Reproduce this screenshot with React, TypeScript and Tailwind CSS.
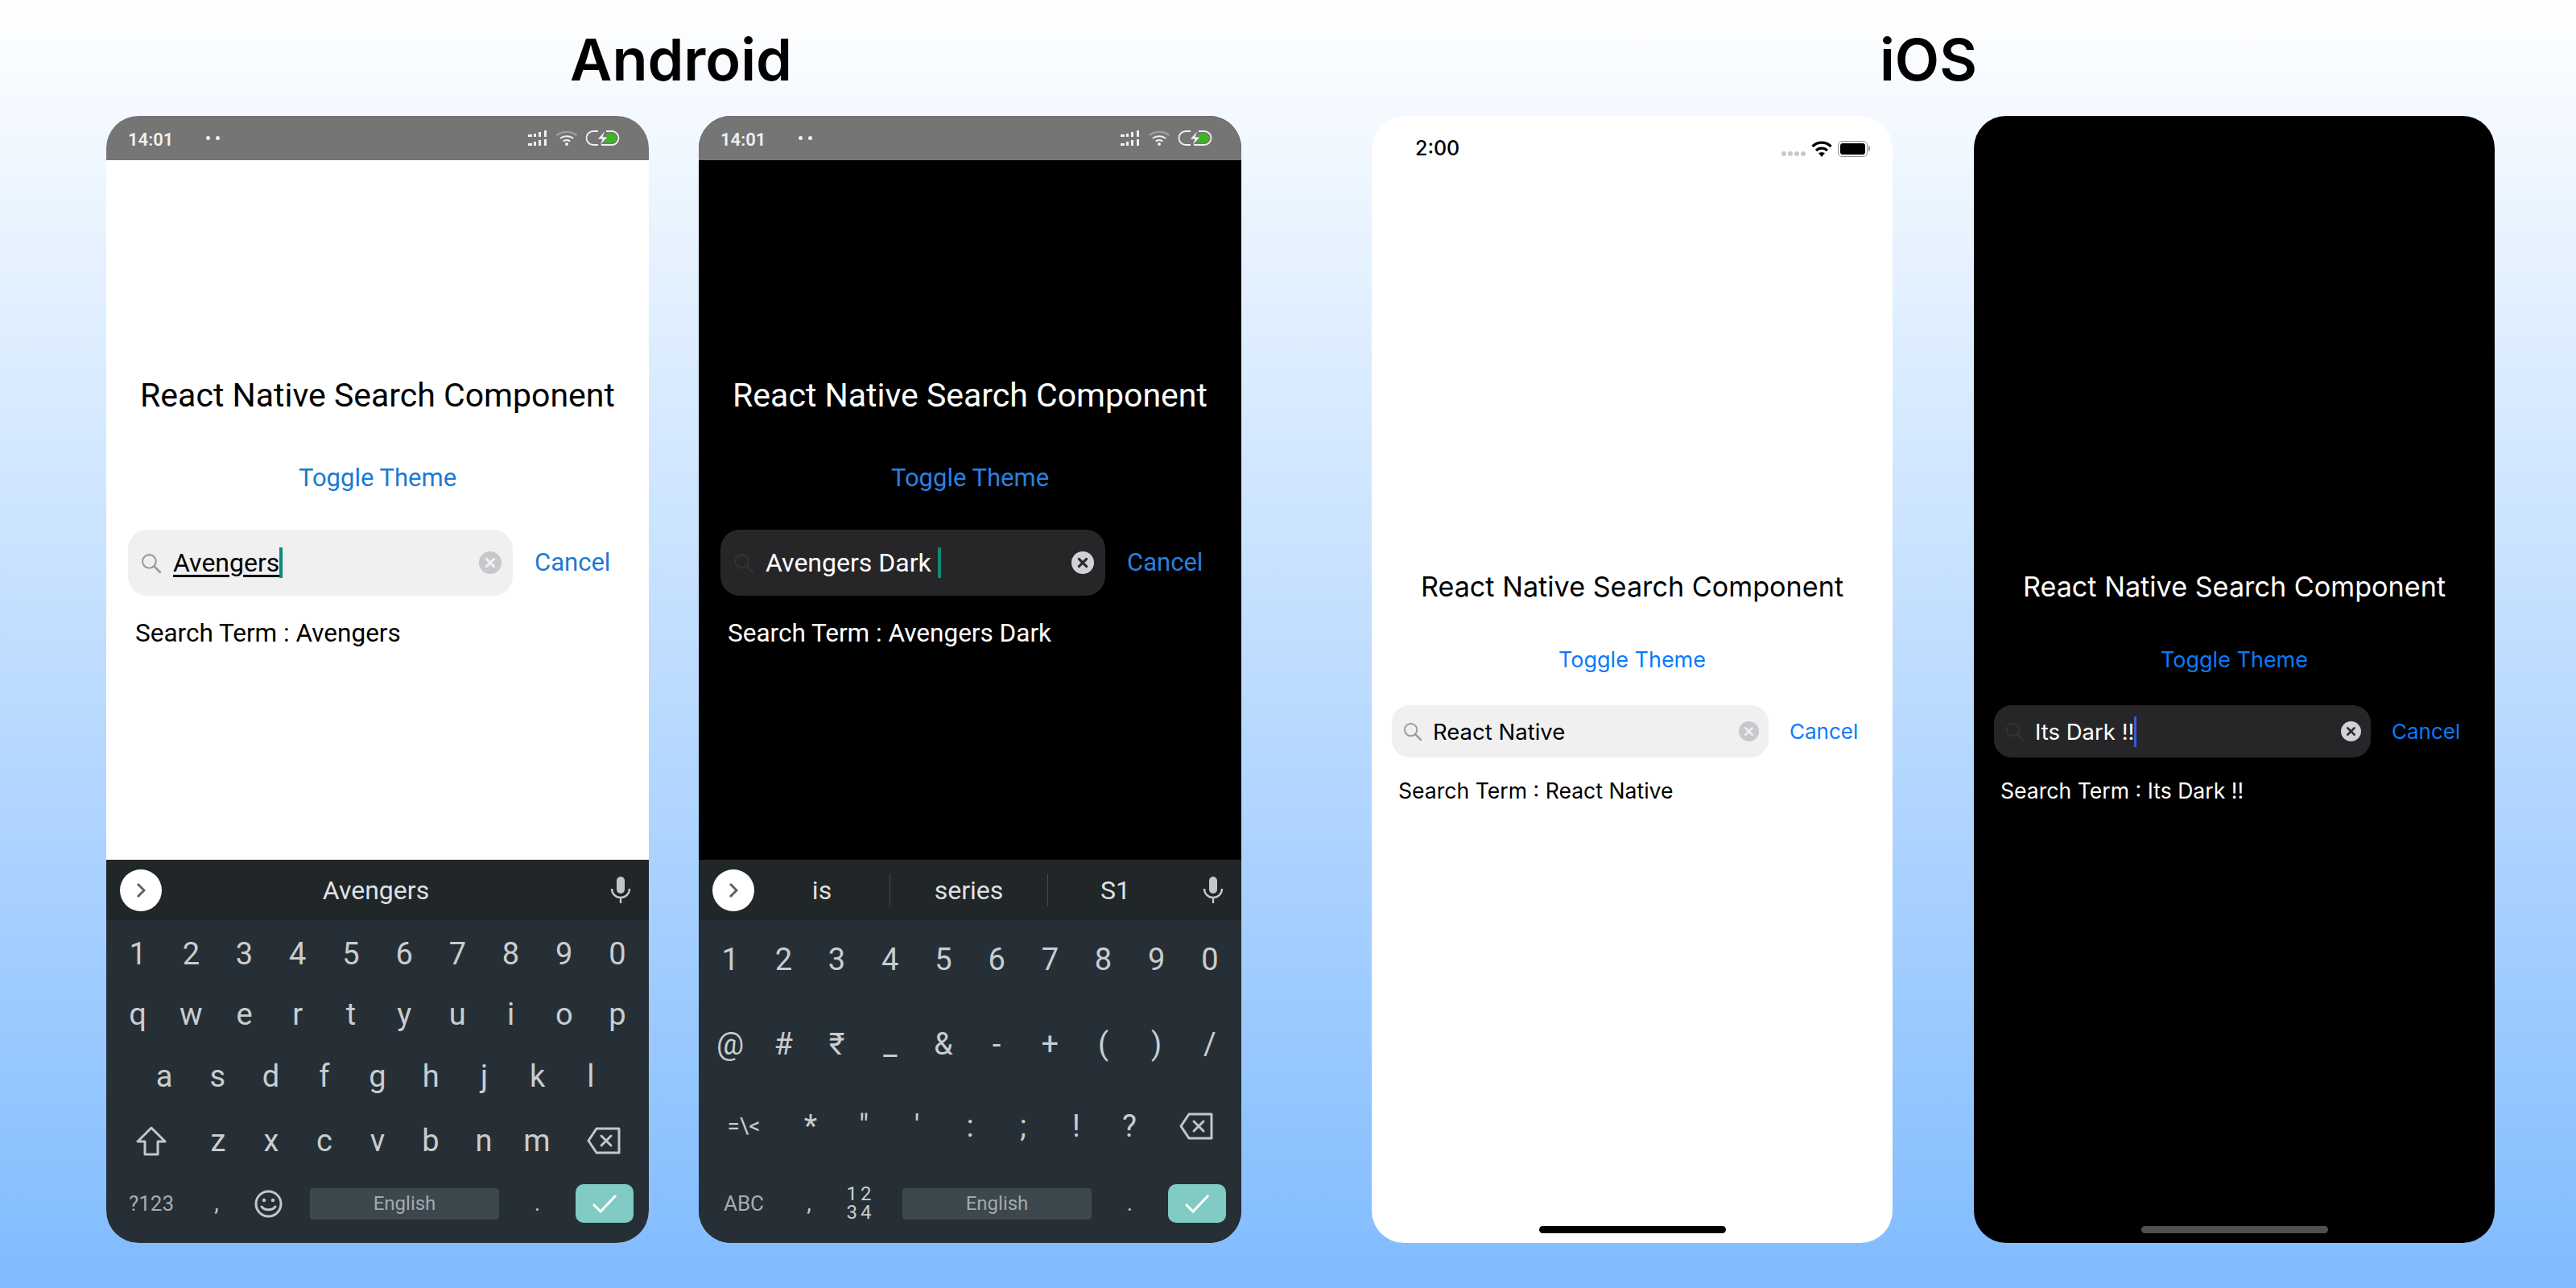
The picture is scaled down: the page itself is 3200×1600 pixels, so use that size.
import type { ReactNode } from "react";

const ROW_1 = ["1", "2", "3", "4", "5", "6", "7", "8", "9", "0"];
const QWERTY = ["q", "w", "e", "r", "t", "y", "u", "i", "o", "p"];
const ASDF = ["a", "s", "d", "f", "g", "h", "j", "k", "l"];
const ZXCV = ["z", "x", "c", "v", "b", "n", "m"];
const SYMBOLS = ["@", "#", "₹", "_", "&", "-", "+", "(", ")", "/"];
const MORE_SYMBOLS = ["*", '"', "'", ":", ";", "!", "?"];

function SearchIcon({ color, size }: { color: string; size: number }) {
  return (
    <svg width={size} height={size} viewBox="0 0 24 24" fill="none" stroke={color} strokeWidth="2" className="shrink-0">
      <circle cx="10" cy="10" r="8" />
      <path d="M16 16l7 7" strokeLinecap="round" strokeWidth="2.6" />
    </svg>
  );
}

function ClearIcon({ dark, size }: { dark: boolean; size: number }) {
  return (
    <svg width={size} height={size} viewBox="0 0 24 24" className="shrink-0">
      <circle cx="12" cy="12" r="12" fill={dark ? "#d2d2d6" : "#c7c7cc"} />
      <path
        d="M8 8l8 8M16 8l-8 8"
        stroke={dark ? "#2a2a2c" : "#f0f0f0"}
        strokeWidth="2.6"
        strokeLinecap="round"
      />
    </svg>
  );
}

function AndroidSignal() {
  return (
    <svg width="25" height="19" viewBox="0 0 25 19" fill="#f0f0f0">
      <rect x="0" y="5" width="5" height="3" />
      <rect x="7" y="4" width="3" height="4" />
      <rect x="13" y="2" width="3" height="6" />
      <rect x="20" y="0" width="3" height="8" />
      <rect x="0" y="16" width="5" height="3" />
      <rect x="7" y="14" width="3" height="5" />
      <rect x="13" y="12" width="3" height="7" />
      <rect x="20" y="11" width="3" height="8" />
    </svg>
  );
}

function AndroidWifi() {
  return (
    <svg width="26" height="19" viewBox="0 0 26 19" fill="none" strokeLinecap="round">
      <path d="M1.5 5.5a16 12 0 0 1 23 0" stroke="#a0a0a0" strokeWidth="2.4" />
      <path d="M5.5 9.5a11 8 0 0 1 15 0" stroke="#f0f0f0" strokeWidth="2" />
      <path d="M9.5 13a6 4.5 0 0 1 7 0" stroke="#f0f0f0" strokeWidth="2" />
      <circle cx="13" cy="17" r="2" fill="#f0f0f0" />
    </svg>
  );
}

function AndroidBattery() {
  return (
    <svg width="43" height="19" viewBox="0 0 43 19" fill="none">
      <path d="M16 1H10a8.5 8.5 0 0 0 0 17h6" stroke="#f0f0f0" strokeWidth="1.8" />
      <path d="M26 1h7a8.5 8.5 0 0 1 0 17H20" stroke="#f0f0f0" strokeWidth="1.8" />
      <path d="M27 3.5h6a6 6 0 0 1 0 12h-9z" fill="#3cb521" />
      <path d="M25 0L15 11h6l-3 8 10-11h-6z" fill="#f4f4f4" stroke="#757575" strokeWidth="0.8" />
    </svg>
  );
}

function BackspaceIcon() {
  return (
    <svg width="42" height="34" viewBox="0 0 42 34" fill="none" stroke="#c4c7c9" strokeWidth="3">
      <path d="M12 2h28v30H12L2 17z" strokeLinejoin="round" />
      <path d="M18 11l12 12M30 11L18 23" strokeLinecap="round" />
    </svg>
  );
}

function ShiftIcon() {
  return (
    <svg width="38" height="37" viewBox="0 0 38 37" fill="none" stroke="#c4c7c9" strokeWidth="3" strokeLinejoin="round">
      <path d="M19 2L2 19h9v16h16V19h9z" />
    </svg>
  );
}

function EmojiIcon() {
  return (
    <svg width="35" height="35" viewBox="0 0 35 35" fill="none" stroke="#c4c7c9" strokeWidth="3">
      <circle cx="17.5" cy="17.5" r="15.5" />
      <circle cx="12" cy="13" r="2.2" fill="#c4c7c9" stroke="none" />
      <circle cx="23" cy="13" r="2.2" fill="#c4c7c9" stroke="none" />
      <path d="M9 21c4 5 13 5 17 0" strokeLinecap="round" />
    </svg>
  );
}

function MicIcon() {
  return (
    <svg width="26" height="34" viewBox="0 0 26 34" fill="none">
      <rect x="8" y="0" width="10" height="21" rx="5" fill="#c4c7c9" />
      <path d="M2 15a11 11 0 0 0 22 0M13 26v7" stroke="#c4c7c9" strokeWidth="2.4" />
    </svg>
  );
}

function Key({ children, className = "" }: { children: ReactNode; className?: string }) {
  return <div className={`flex flex-1 items-center justify-center ${className}`}>{children}</div>;
}

function KeyRow({ children, className = "" }: { children: ReactNode; className?: string }) {
  return <div className={`flex w-full items-center text-[38px] font-normal leading-none text-[#c9cdd0] ${className}`}>{children}</div>;
}

function BottomRow({ left, third }: { left: string; third: ReactNode }) {
  return (
    <KeyRow className="mt-auto h-[48px] pr-[13px]">
      <div className="flex w-[100px] justify-center text-[26px] text-[#a9adb0]">{left}</div>
      <div className="flex w-[62px] justify-center text-[28px] text-[#c4c7c9]">,</div>
      <div className="flex w-[66px] justify-center">{third}</div>
      <div className="ml-[19px] flex h-[39px] w-[235px] items-center justify-center rounded-[4px] bg-[#3c474e] text-[24px] font-normal text-[#a4a9ac]">
        English
      </div>
      <div className="flex flex-1 justify-center text-[28px] text-[#c4c7c9]">.</div>
      <div className="flex h-[48px] w-[72px] items-center justify-center rounded-[10px] bg-[#80cbc4]">
        <svg width="30" height="24" viewBox="0 0 30 24" fill="none" stroke="#fff" strokeWidth="3">
          <path d="M1 13l9 9L29 2" />
        </svg>
      </div>
    </KeyRow>
  );
}

function Keyboard({ symbols, suggestions }: { symbols: boolean; suggestions: string[] }) {
  return (
    <div className="flex h-[476px] shrink-0 flex-col bg-[#272f36]">
      <div className="flex h-[75px] shrink-0 items-center bg-[#212629] pl-[17px] pr-[22px] text-[32px] text-[#dfe1e2]">
        <div className="flex h-[52px] w-[52px] shrink-0 items-center justify-center rounded-full bg-white">
          <svg width="12" height="20" viewBox="0 0 12 20" fill="none" stroke="#616161" strokeWidth="3">
            <path d="M2 2l8 8-8 8" />
          </svg>
        </div>
        <div className="flex w-[532px] items-center">
          {suggestions.map((word, i) => (
            <div
              key={word}
              className={`flex h-[40px] items-center justify-center ${suggestions.length === 1 ? "w-full" : i === 1 ? "w-[196px]" : "w-[168px]"} ${i > 0 ? "border-l border-[#454b4f]" : ""}`}
            >
              {word}
            </div>
          ))}
        </div>
        <div className="ml-auto flex">
          <MicIcon />
        </div>
      </div>
      {symbols ? (
        <div className="flex flex-1 flex-col px-[6px] pb-[25px] pt-[25px]">
          <KeyRow className="h-[48px]">{ROW_1.map((k) => <Key key={k}>{k}</Key>)}</KeyRow>
          <KeyRow className="mt-[57px] h-[48px]">{SYMBOLS.map((k) => <Key key={k}>{k}</Key>)}</KeyRow>
          <KeyRow className="mt-[54px] h-[48px]">
            <div className="flex w-[100px] justify-center text-[28px] font-normal">=\&lt;</div>
            {MORE_SYMBOLS.map((k) => <Key key={k}>{k}</Key>)}
            <div className="flex w-[100px] justify-center"><BackspaceIcon /></div>
          </KeyRow>
          <BottomRow
            left="ABC"
            third={
              <div className="flex flex-col items-center text-[24px] font-normal leading-[23px] tracking-[4px]">
                <span>12</span>
                <span>34</span>
              </div>
            }
          />
        </div>
      ) : (
        <div className="flex flex-1 flex-col px-[6px] pb-[25px] pt-[18px]">
          <KeyRow className="h-[48px]">{ROW_1.map((k) => <Key key={k}>{k}</Key>)}</KeyRow>
          <KeyRow className="mt-[27px] h-[48px]">{QWERTY.map((k) => <Key key={k}>{k}</Key>)}</KeyRow>
          <KeyRow className="mt-[29px] h-[48px] px-[33px]">{ASDF.map((k) => <Key key={k}>{k}</Key>)}</KeyRow>
          <KeyRow className="mt-[32px] h-[48px]">
            <div className="flex w-[100px] justify-center"><ShiftIcon /></div>
            {ZXCV.map((k) => <Key key={k}>{k}</Key>)}
            <div className="flex w-[100px] justify-center"><BackspaceIcon /></div>
          </KeyRow>
          <BottomRow left="?123" third={<EmojiIcon />} />
        </div>
      )}
    </div>
  );
}

function AndroidPhone({
  dark,
  value,
  suggestions,
  symbols,
}: {
  dark: boolean;
  value: string;
  suggestions: string[];
  symbols: boolean;
}) {
  return (
    <div className={`flex h-[1400px] w-[674px] flex-col overflow-hidden rounded-[40px] font-['Roboto',sans-serif] ${dark ? "bg-black text-white" : "bg-white text-black"}`}>
      <div className="flex h-[55px] shrink-0 items-center bg-[#757575] pl-[27px] pr-[36px] text-white">
        <span className="pt-[3px] text-[22px] font-semibold text-[#f0f0f0]">14:01</span>
        <span className="ml-[41px] flex gap-[7px]">
          <i className="h-[5px] w-[5px] rounded-full bg-[#f0f0f0]" />
          <i className="h-[5px] w-[5px] rounded-full bg-[#f0f0f0]" />
        </span>
        <div className="ml-auto flex items-center gap-[10px]">
          <AndroidSignal />
          <AndroidWifi />
          <AndroidBattery />
        </div>
      </div>
      <div className="flex flex-1 flex-col px-[27px]">
        <div className="mt-[263px] text-center text-[41px] leading-[58px]">React Native Search Component</div>
        <div className={`mt-[56px] text-center text-[31px] leading-[36px] ${dark ? "text-[#2a80e0]" : "text-[#1a7ad4]"}`}>Toggle Theme</div>
        <div className="mt-[46px] flex items-center">
          <div className={`flex h-[82px] w-[478px] items-center rounded-[24px] pl-[16px] pr-[14px] ${dark ? "bg-[#262628]" : "bg-[#f0f0f0]"}`}>
            <SearchIcon color={dark ? "#333335" : "#9a9a9a"} size={25} />
            <div className="ml-[15px] flex flex-1 items-center text-[32px] leading-[40px]">
              <span className={dark ? "" : "underline underline-offset-[4px]"}>{value}</span>
              <i className={`h-[38px] w-[4px] bg-[#0f8a78] ${dark ? "ml-[8px]" : ""}`} />
            </div>
            <ClearIcon dark={dark} size={28} />
          </div>
          <div className={`ml-[27px] text-[31px] leading-[40px] ${dark ? "text-[#2a80e0]" : "text-[#1a7ad4]"}`}>Cancel</div>
        </div>
        <div className="ml-[9px] mt-[27px] text-[31.5px] leading-[40px]">Search Term : {value}</div>
      </div>
      <Keyboard symbols={symbols} suggestions={suggestions} />
    </div>
  );
}

function IosPhone({ dark, value }: { dark: boolean; value: string }) {
  return (
    <div className={`flex h-[1400px] w-[647px] flex-col overflow-hidden rounded-[40px] font-['Inter',sans-serif] ${dark ? "bg-black text-white" : "bg-white text-black"}`}>
      <div className="flex h-[78px] shrink-0 items-center pl-[54px] pr-[28px] pt-[3px]">
        {!dark && (
          <>
            <span className="text-[25px] font-medium">2:00</span>
            <div className="ml-auto flex items-center">
              <span className="mt-[12px] flex gap-[2px]">
                <i className="h-[6px] w-[6px] rounded-full bg-[#c8c8c8]" />
                <i className="h-[6px] w-[6px] rounded-full bg-[#c8c8c8]" />
                <i className="h-[6px] w-[6px] rounded-full bg-[#c8c8c8]" />
                <i className="h-[6px] w-[6px] rounded-full bg-[#c8c8c8]" />
              </span>
              <svg width="26" height="20" viewBox="0 0 26 20" className="ml-[7px]" fill="none" stroke="#000" strokeWidth="3.4">
                <path d="M1.5 7a16 16 0 0 1 23 0M6 12a10 10 0 0 1 14 0" />
                <path d="M9 15l4-1 4 1-4 5z" fill="#000" stroke="none" />
              </svg>
              <div className="ml-[7px] flex items-center">
                <div className="h-[20px] w-[37px] rounded-[5px] border border-[#8e8e8e] p-[2px]">
                  <div className="h-full w-full rounded-[3px] bg-black" />
                </div>
                <i className="ml-[1px] h-[7px] w-[2px] rounded-r-full bg-[#9a9a9a]" />
              </div>
            </div>
          </>
        )}
      </div>
      <div className="flex flex-1 flex-col px-[25px]">
        <div className="mt-[485px] text-center text-[34.2px] leading-[44px]">React Native Search Component</div>
        <div className="mt-[51px] text-center text-[27px] leading-[36px] text-[#0a7aff]">Toggle Theme</div>
        <div className="mt-[38px] flex items-center">
          <div className={`flex h-[65px] w-[468px] items-center rounded-[22px] pl-[14px] pr-[12px] ${dark ? "bg-[#262628]" : "bg-[#f0f0f0]"}`}>
            <SearchIcon color={dark ? "#333335" : "#9a9a9a"} size={23} />
            <div className="ml-[14px] flex flex-1 items-center text-[27.5px] leading-[36px]">
              <span>{value}</span>
              {dark && <i className="h-[38px] w-[3px] bg-[#3a5bd9]" />}
            </div>
            <ClearIcon dark={dark} size={25} />
          </div>
          <div className="ml-[26px] text-[26px] leading-[36px] text-[#0a7aff]">Cancel</div>
        </div>
        <div className="ml-[8px] mt-[23px] text-[26.6px] leading-[36px]">Search Term : {value}</div>
        <div className={`mb-[12px] mt-auto h-[9px] w-[232px] self-center rounded-full ${dark ? "bg-[#4f4f4f]" : "bg-black"}`} />
      </div>
    </div>
  );
}

export default function App() {
  return (
    <div className="flex h-[1600px] w-[3200px] overflow-hidden bg-gradient-to-b from-white to-[#80bbff] pl-[132px] pt-[34px]">
      <section className="w-[1410px]">
        <h1 className="pl-[18px] text-center font-['Inter',sans-serif] text-[72px] font-semibold leading-[80px] text-black">Android</h1>
        <div className="mt-[30px] flex gap-[62px]">
          <AndroidPhone dark={false} value="Avengers" suggestions={["Avengers"]} symbols={false} />
          <AndroidPhone dark value="Avengers Dark" suggestions={["is", "series", "S1"]} symbols />
        </div>
      </section>
      <section className="ml-[162px] w-[1395px]">
        <h1 className="pr-[12px] text-center font-['Inter',sans-serif] text-[72px] font-semibold leading-[80px] text-black">iOS</h1>
        <div className="mt-[30px] flex gap-[101px]">
          <IosPhone dark={false} value="React Native" />
          <IosPhone dark value="Its Dark !!" />
        </div>
      </section>
    </div>
  );
}
